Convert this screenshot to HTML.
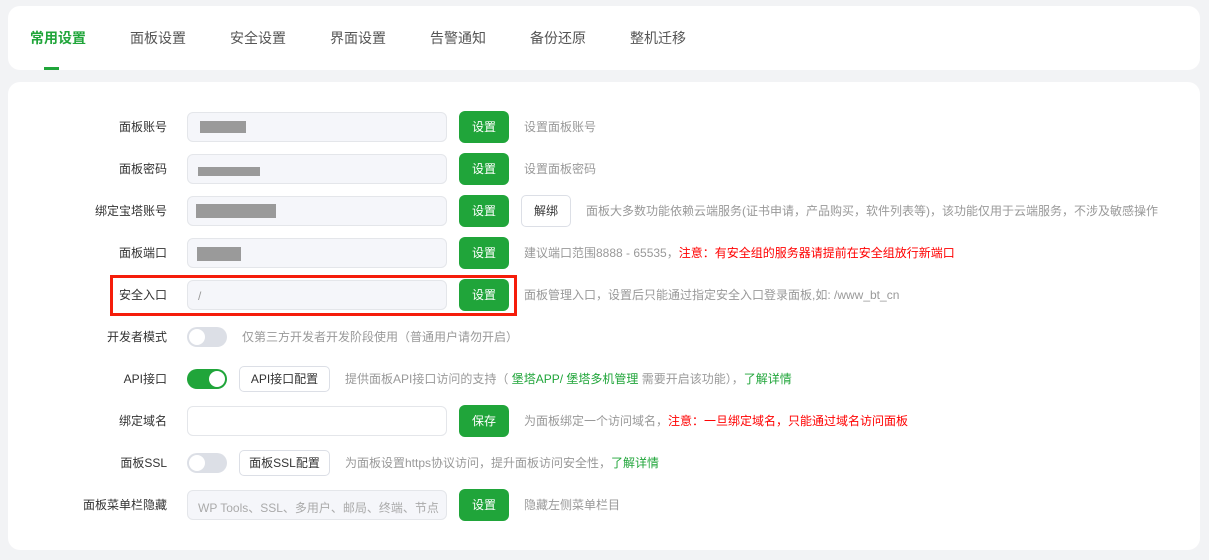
<!DOCTYPE html><html><head><meta charset="utf-8"><style>
*{box-sizing:border-box;margin:0;padding:0}
body{width:1209px;height:560px;background:#f2f3f5;font-family:"Liberation Sans","Noto Sans CJK SC",sans-serif;position:relative;overflow:hidden;color:#333}
.card{position:absolute;left:8px;width:1192px;background:#fff;border-radius:12px}
.tab{position:absolute;top:22px;font-size:14px;color:#555}
.row{position:absolute;left:0;height:32px;width:1190px}
.lbl{position:absolute;right:1031px;top:7px;font-size:12px;color:#333;white-space:nowrap}
.inp{position:absolute;left:179px;top:1px;width:260px;height:30px;border:1px solid #e4e6ea;border-radius:6px;background:#f5f6fa;font-size:12px;color:#aaa;padding:8px 10px;white-space:nowrap;overflow:hidden}
.btn{position:absolute;left:451px;top:0;width:50px;height:32px;background:#20a53a;border-radius:6px;color:#fff;font-size:12px;text-align:center;line-height:32px}
.ob{position:absolute;top:3px;height:26px;border:1px solid #dcdfe6;border-radius:5px;background:#fff;font-size:12px;line-height:24px;text-align:center;color:#333}
.d{position:absolute;top:7px;font-size:12px;color:#999;white-space:nowrap}
.g{color:#20a53a}.r{color:#f00}
.bar{position:absolute;height:12px;background:#9a9a9a}
.tg{position:absolute;left:179px;top:6px;width:40px;height:20px;border-radius:10px;background:#dcdfe6}
.tg i{position:absolute;top:2px;left:2px;width:16px;height:16px;border-radius:50%;background:#fff}
.tg.on{background:#20a53a}.tg.on i{left:22px}
</style></head><body>
<div class="card" style="top:6px;height:64px">
<span class="tab" style="left:22px;color:#20a53a;font-weight:bold">常用设置</span>
<div style="position:absolute;left:36px;top:61px;width:15px;height:3px;background:#20a53a"></div>
<span class="tab" style="left:122px">面板设置</span>
<span class="tab" style="left:222px">安全设置</span>
<span class="tab" style="left:322px">界面设置</span>
<span class="tab" style="left:422px">告警通知</span>
<span class="tab" style="left:522px">备份还原</span>
<span class="tab" style="left:622px">整机迁移</span>
</div>
<div class="card" style="top:82px;height:468px">
<div class="row" style="top:29px"><span class="lbl">面板账号</span><div class="inp"></div><div class="bar" style="left:192px;top:10px;width:46px"></div><div class="btn">设置</div><span class="d" style="left:516px">设置面板账号</span></div>
<div class="row" style="top:71px"><span class="lbl">面板密码</span><div class="inp"></div><div class="bar" style="left:190px;top:14px;width:62px;height:9px"></div><div class="btn">设置</div><span class="d" style="left:516px">设置面板密码</span></div>
<div class="row" style="top:113px"><span class="lbl">绑定宝塔账号</span><div class="inp"></div><div class="bar" style="left:188px;top:9px;width:80px;height:14px"></div><div class="btn">设置</div><div class="ob" style="left:513px;top:0;width:50px;height:32px;line-height:30px">解绑</div><span class="d" style="left:578px">面板大多数功能依赖云端服务(证书申请，产品购买，软件列表等)，该功能仅用于云端服务，不涉及敏感操作</span></div>
<div class="row" style="top:155px"><span class="lbl">面板端口</span><div class="inp"></div><div class="bar" style="left:189px;top:10px;width:44px;height:14px"></div><div class="btn">设置</div><span class="d" style="left:516px">建议端口范围8888 - 65535，<span class="r">注意：有安全组的服务器请提前在安全组放行新端口</span></span></div>
<div class="row" style="top:197px"><span class="lbl">安全入口</span><div class="inp" style="color:#999">/</div><div class="btn">设置</div><span class="d" style="left:516px">面板管理入口，设置后只能通过指定安全入口登录面板,如: /www_bt_cn</span></div>
<div style="position:absolute;left:102px;top:193px;width:407px;height:41px;border:3px solid #f51d0a"></div>
<div class="row" style="top:239px"><span class="lbl">开发者模式</span><div class="tg"><i></i></div><span class="d" style="left:234px">仅第三方开发者开发阶段使用（普通用户请勿开启）</span></div>
<div class="row" style="top:281px"><span class="lbl">API接口</span><div class="tg on"><i></i></div><div class="ob" style="left:231px;width:91px">API接口配置</div><span class="d" style="left:337px">提供面板API接口访问的支持（ <span class="g">堡塔APP/ 堡塔多机管理</span> 需要开启该功能），<span class="g">了解详情</span></span></div>
<div class="row" style="top:323px"><span class="lbl">绑定域名</span><div class="inp" style="background:#fff"></div><div class="btn">保存</div><span class="d" style="left:516px">为面板绑定一个访问域名，<span class="r">注意：一旦绑定域名，只能通过域名访问面板</span></span></div>
<div class="row" style="top:365px"><span class="lbl">面板SSL</span><div class="tg"><i></i></div><div class="ob" style="left:231px;width:91px">面板SSL配置</div><span class="d" style="left:337px">为面板设置https协议访问，提升面板访问安全性，<span class="g">了解详情</span></span></div>
<div class="row" style="top:407px"><span class="lbl">面板菜单栏隐藏</span><div class="inp">WP Tools、SSL、多用户、邮局、终端、节点</div><div class="btn">设置</div><span class="d" style="left:516px">隐藏左侧菜单栏目</span></div>
</div>
</body></html>
